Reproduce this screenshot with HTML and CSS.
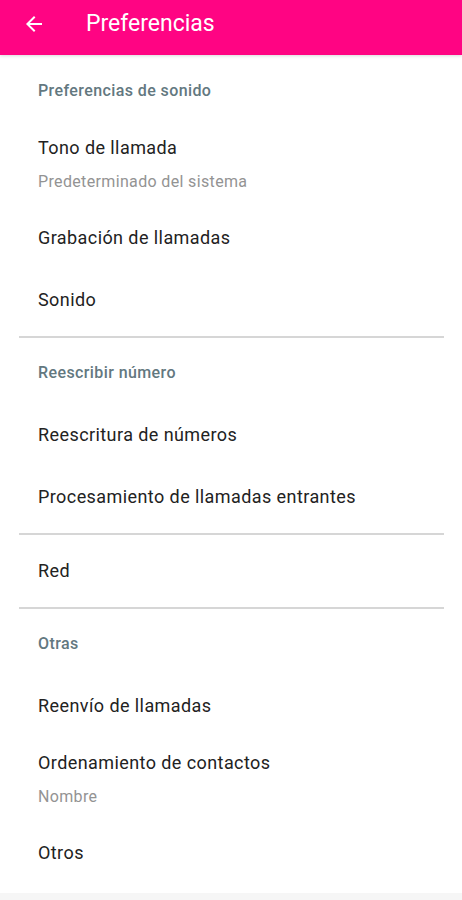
FILE: index.html
```html
<!DOCTYPE html>
<html lang="es">
<head>
    <meta charset="UTF-8">
    <title>Preferencias</title>
    <link rel="stylesheet" href="styles.css">
</head>
<body>
<div class="toolbar">
    <svg class="back" width="24" height="24" viewBox="0 0 24 24">
        <path d="M20 11H7.83l5.59-5.59L12 4l-8 8 8 8 1.41-1.41L7.83 13H20v-2z" fill="#fff"/>
    </svg>
    <span class="title">Preferencias</span>
</div>
<div class="prefs">
    <div class="category first">Preferencias de sonido</div>
    <div class="item two">
        <div class="item-title">Tono de llamada</div>
        <div class="item-summary">Predeterminado del sistema</div>
    </div>
    <div class="item"><div class="item-title">Grabación de llamadas</div></div>
    <div class="item"><div class="item-title">Sonido</div></div>
    <div class="divider"></div>

    <div class="category">Reescribir número</div>
    <div class="item"><div class="item-title">Reescritura de números</div></div>
    <div class="item"><div class="item-title">Procesamiento de llamadas entrantes</div></div>
    <div class="divider"></div>

    <div class="item"><div class="item-title">Red</div></div>
    <div class="divider"></div>

    <div class="category">Otras</div>
    <div class="item"><div class="item-title">Reenvío de llamadas</div></div>
    <div class="item two">
        <div class="item-title">Ordenamiento de contactos</div>
        <div class="item-summary">Nombre</div>
    </div>
    <div class="item"><div class="item-title">Otros</div></div>
</div>
<div class="bottom"></div>
</body>
</html>
```

FILE: styles.css
```css
body {
    margin: 0;
    background: #fff;
    font-family: Roboto, "Noto Sans", sans-serif;
}
.toolbar {
    height: 55px;
    box-sizing: border-box;
    padding-bottom: 8px;
    background: #ff0483;
    display: flex;
    align-items: center;
    box-shadow: 0 1px 3px rgba(0, 0, 0, 0.15);
    position: relative;
}
.back {
    margin-left: 22px;
}
.title {
    margin-left: 40px;
    color: #fff;
    font-size: 23px;
}
.prefs {
    height: 838px;
}
.category {
    height: 61px;
    box-sizing: border-box;
    padding: 20px 0 0 38px;
    font-size: 16px;
    line-height: 20px;
    font-weight: 500;
    letter-spacing: 0.4px;
    color: #63787f;
}
.category.first {
    height: 67px;
    padding-top: 26px;
}
.item {
    height: 62px;
    display: flex;
    flex-direction: column;
    justify-content: center;
    padding-left: 38px;
}
.item.two {
    height: 85px;
    justify-content: flex-start;
}
.item-title {
    font-size: 18px;
    line-height: 22px;
    letter-spacing: 0.42px;
    color: #222;
}
.item.two .item-title {
    margin-top: 15px;
}
.item-summary {
    margin-top: 13px;
    font-size: 16px;
    line-height: 20px;
    letter-spacing: 0.35px;
    color: #939393;
}
.divider {
    height: 1.5px;
    background: #d6d6d6;
    margin: 5px 18px 5.5px 19px;
}
.bottom {
    height: 7px;
    background: #f6f6f6;
}
```
